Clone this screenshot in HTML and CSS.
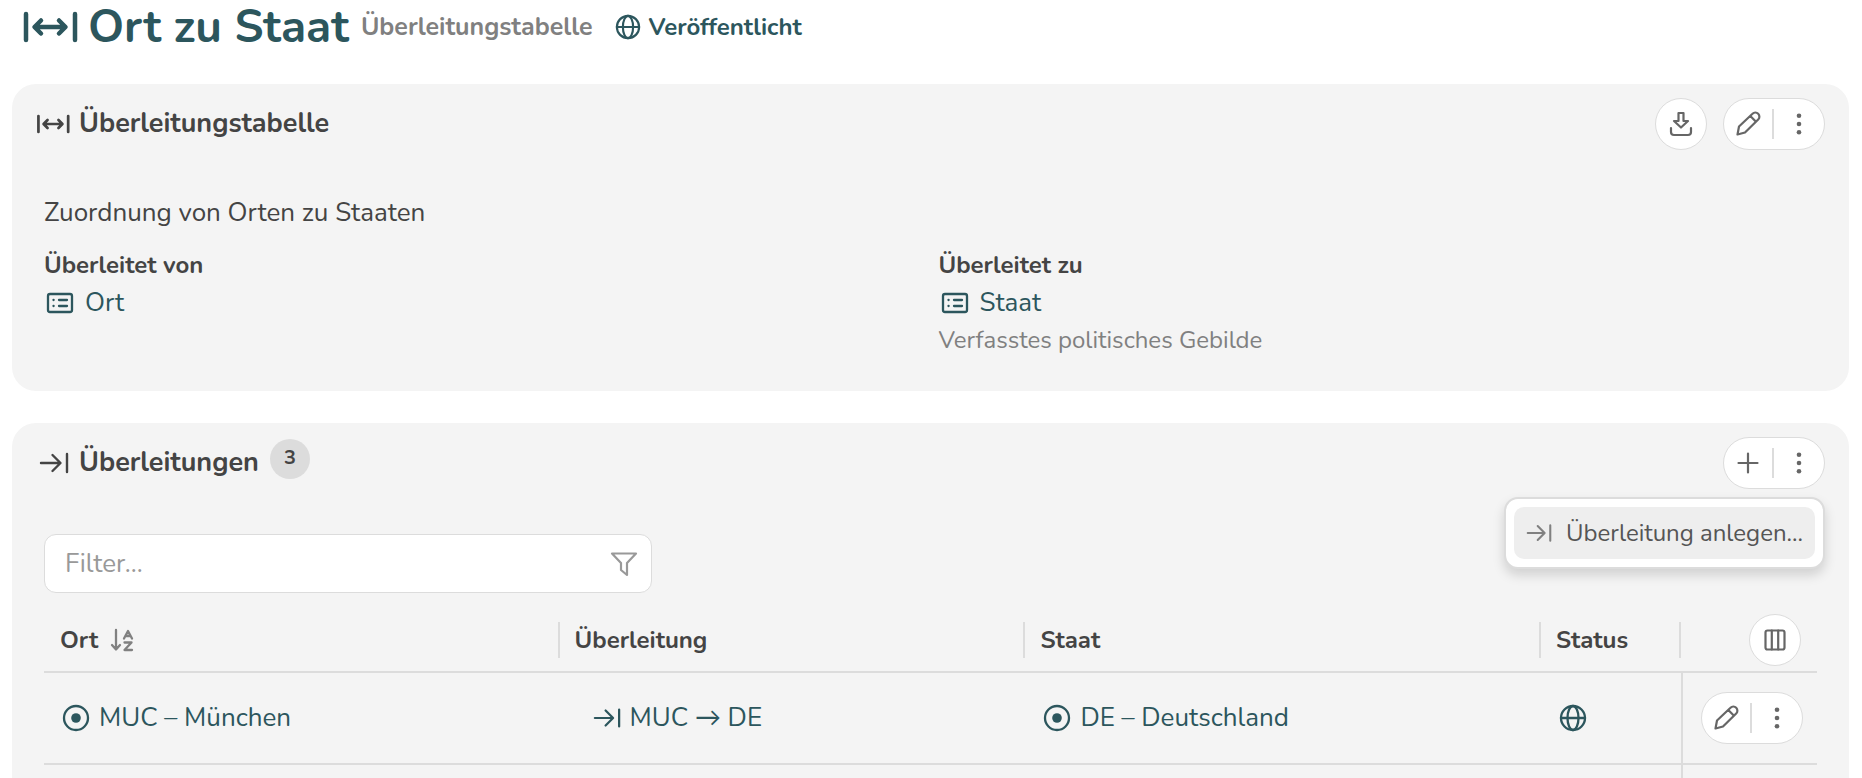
FILE: index.html
```html
<!DOCTYPE html>
<html lang="de">
<head>
    <meta charset="UTF-8">
    <meta name="viewport" content="width=device-width, initial-scale=1.0">
    <title>Ort zu Staat</title>
    <link rel="stylesheet" href="styles.css">
</head>
<body>
    <svg class="symbols" aria-hidden="true">
        <symbol id="i-mapping" viewBox="0 0 56 32" stroke-width="4.500">
            <path d="M4 3v26M53 3v26M13 16h30M19 9.500L12.500 16l6.500 6.500M37 9.500l6.500 6.500-6.500 6.500"/>
        </symbol>
        <symbol id="i-arrow" viewBox="0 0 30 24" stroke-width="2.400">
            <path d="M2 12h19M13.500 4l8 8-8 8M28 3v18"/>
        </symbol>
        <symbol id="i-globe" viewBox="0 0 28 28" stroke-width="2.300">
            <circle cx="14" cy="14" r="12"/>
            <ellipse cx="14" cy="14" rx="5.500" ry="12"/>
            <path d="M2 14h24"/>
        </symbol>
        <symbol id="i-list" viewBox="0 0 28 22" stroke-width="2.300">
            <rect x="2" y="2" width="24" height="18" rx="2"/>
            <path d="M7.500 8h.1M7.500 14h.1M13 8h8M13 14h8"/>
        </symbol>
        <symbol id="i-target" viewBox="0 0 28 28" stroke-width="2.300">
            <circle cx="14" cy="14" r="12"/>
            <circle class="dot" cx="14" cy="14" r="4.800"/>
        </symbol>
        <symbol id="i-pencil" viewBox="0 0 26 26" stroke-width="2.200">
            <path d="M2.500 23.500l1.500-8L17.500 2.800a3.900 3.900 0 0 1 5.700 5.700L10 21.500zM15.300 5l5.700 5.700"/>
        </symbol>
        <symbol id="i-dots" viewBox="0 0 26 26">
            <circle class="dot" cx="13" cy="4.800" r="2.300"/>
            <circle class="dot" cx="13" cy="13" r="2.300"/>
            <circle class="dot" cx="13" cy="21.200" r="2.300"/>
        </symbol>
        <symbol id="i-download" viewBox="0 0 26 26" stroke-width="2.200">
            <path d="M10.500 2h5v8h4.500l-7 6.500-7-6.500h4.500zM3 17v4a3 3 0 0 0 3 3h14a3 3 0 0 0 3-3v-4"/>
        </symbol>
        <symbol id="i-plus" viewBox="0 0 26 26" stroke-width="2.200">
            <path d="M13 3.500v19M3.500 13h19"/>
        </symbol>
        <symbol id="i-columns" viewBox="0 0 26 26" stroke-width="2.200">
            <rect x="3.500" y="3.500" width="19" height="19" rx="2"/>
            <path d="M9.800 3.500v19M16.200 3.500v19"/>
        </symbol>
        <symbol id="i-filter" viewBox="0 0 28 26" stroke-width="2.200">
            <path d="M2 2.500h24l-9 9.500v12l-6-5v-7z"/>
        </symbol>
        <symbol id="i-sort" viewBox="0 0 24 24" stroke-width="2.300">
            <path d="M6 2v19M2 17l4 4.500L10 17M14 10.500L18 3l4 7.500M15.500 8h5M14.500 14.500h7l-7 7.500h7.500"/>
        </symbol>
    </svg>

    <header class="page-header">
        <svg class="icon icon-title"><use href="#i-mapping"/></svg>
        <h1>Ort zu Staat</h1>
        <span class="type">Überleitungstabelle</span>
        <span class="state">
            <svg class="icon"><use href="#i-globe"/></svg>
            Veröffentlicht
        </span>
    </header>

    <section class="card">
        <div class="card-header">
            <svg class="icon icon-mapping"><use href="#i-mapping"/></svg>
            <h2>Überleitungstabelle</h2>
            <div class="actions">
                <button class="round" aria-label="Herunterladen"><svg class="icon"><use href="#i-download"/></svg></button>
                <div class="pill">
                    <button aria-label="Bearbeiten"><svg class="icon"><use href="#i-pencil"/></svg></button>
                    <button aria-label="Mehr"><svg class="icon"><use href="#i-dots"/></svg></button>
                </div>
            </div>
        </div>
        <div class="card-body">
            <p>Zuordnung von Orten zu Staaten</p>
            <div class="fields">
                <div>
                    <h3>Überleitet von</h3>
                    <a class="link" href="#"><svg class="icon icon-list"><use href="#i-list"/></svg>Ort</a>
                </div>
                <div>
                    <h3>Überleitet zu</h3>
                    <a class="link" href="#"><svg class="icon icon-list"><use href="#i-list"/></svg>Staat</a>
                    <div class="hint">Verfasstes politisches Gebilde</div>
                </div>
            </div>
        </div>
    </section>

    <section class="card">
        <div class="card-header">
            <svg class="icon icon-arrow"><use href="#i-arrow"/></svg>
            <h2>Überleitungen</h2>
            <span class="badge">3</span>
            <div class="actions">
                <div class="pill">
                    <button aria-label="Hinzufügen"><svg class="icon"><use href="#i-plus"/></svg></button>
                    <button aria-label="Mehr"><svg class="icon"><use href="#i-dots"/></svg></button>
                </div>
                <div class="menu">
                    <button><svg class="icon"><use href="#i-arrow"/></svg>Überleitung anlegen...</button>
                </div>
            </div>
        </div>
        <div class="card-body">
            <label class="filter">
                <input type="text" placeholder="Filter..." aria-label="Filter">
                <svg class="icon"><use href="#i-filter"/></svg>
            </label>
            <table>
                <colgroup>
                    <col class="col-ort">
                    <col class="col-map">
                    <col class="col-staat">
                    <col class="col-status">
                    <col class="col-actions">
                </colgroup>
                <thead>
                    <tr>
                        <th><div class="th">Ort <svg class="icon icon-sort"><use href="#i-sort"/></svg></div></th>
                        <th><div class="th">Überleitung</div></th>
                        <th><div class="th">Staat</div></th>
                        <th><div class="th">Status</div></th>
                        <th><button class="round" aria-label="Spalten"><svg class="icon"><use href="#i-columns"/></svg></button></th>
                    </tr>
                </thead>
                <tbody>
                    <tr>
                        <td><a class="link" href="#"><svg class="icon"><use href="#i-target"/></svg>MUC – München</a></td>
                        <td class="mapping"><a class="link" href="#"><svg class="icon"><use href="#i-arrow"/></svg>MUC → DE</a></td>
                        <td><a class="link" href="#"><svg class="icon"><use href="#i-target"/></svg>DE – Deutschland</a></td>
                        <td><span class="link"><svg class="icon"><use href="#i-globe"/></svg></span></td>
                        <td>
                            <div class="pill">
                                <button aria-label="Bearbeiten"><svg class="icon"><use href="#i-pencil"/></svg></button>
                                <button aria-label="Mehr"><svg class="icon"><use href="#i-dots"/></svg></button>
                            </div>
                        </td>
                    </tr>
                    <tr><td></td><td></td><td></td><td></td><td></td></tr>
                </tbody>
            </table>
        </div>
    </section>
</body>
</html>
```
FILE: styles.css
```css
* {
    box-sizing: border-box;
}
body {
    font-family: Nunito, Lato, 'Noto Sans', sans-serif;
    font-size: 26px;
    line-height: 36px;
    margin: 0;
    padding: 0 13px 0 12px;
    height: 100vh;
    overflow: hidden;
    background-color: #fff;
    color: #444;
}
h1, h2, h3, p {
    margin: 0;
}
button, input {
    font: inherit;
    color: inherit;
}
.symbols {
    display: none;
}
.icon {
    width: 28px;
    height: 28px;
    flex: none;
    fill: none;
    stroke: currentColor;
    stroke-linecap: round;
    stroke-linejoin: round;
}
.dot {
    fill: currentColor;
    stroke: none;
}

/* Seitenkopf */
.page-header {
    display: flex;
    align-items: center;
    height: 54px;
    margin-bottom: 30px;
    padding-left: 10px;
    color: #2c565d;
}
.icon-title {
    width: 56px;
    height: 32px;
    margin-right: 10px;
}
h1 {
    font-size: 46px;
    line-height: 54px;
}
.type, .state {
    font-weight: bold;
}
.type {
    font-size: 25px;
    color: #808080;
    margin: 0 22px 0 12px;
}
.state {
    display: flex;
    align-items: center;
    gap: 8px;
    font-size: 24px;
}
.state .icon {
    width: 26px;
    height: 26px;
}

/* Karten */
.card {
    background-color: #f4f4f4;
    border-radius: 24px;
    margin-bottom: 32px;
    padding: 14px 24px 32px;
}
.card-header {
    display: flex;
    align-items: center;
    height: 52px;
    margin-bottom: 45px;
}
.icon-mapping {
    width: 34px;
    margin-right: 9px;
}
.icon-arrow {
    width: 30px;
    margin: 0 10px 0 3px;
}
h2 {
    font-size: 27px;
    line-height: 36px;
}
.badge {
    width: 40px;
    height: 40px;
    margin: 0 0 8px 11px;
    border-radius: 50%;
    background-color: #dcdcdc;
    font-size: 20px;
    font-weight: bold;
    line-height: 38px;
    text-align: center;
}
.card-body {
    padding: 0 8px;
}
.actions {
    position: relative;
    display: flex;
    gap: 16px;
    margin-left: auto;
}
.round, .pill {
    height: 52px;
    border: 1px solid #dcdcdc;
    border-radius: 26px;
    background-color: #fff;
    color: #666;
}
.round {
    display: flex;
    align-items: center;
    justify-content: center;
    width: 52px;
    padding: 0;
}
.round .icon, .pill .icon {
    width: 26px;
    height: 26px;
}
.pill {
    display: flex;
    align-items: center;
    width: 102px;
}
.pill button {
    display: flex;
    align-items: center;
    justify-content: center;
    width: 50px;
    height: 30px;
    padding: 0;
    border: none;
    border-right: 2px solid #dcdcdc;
    background: none;
}
.pill button + button {
    border-right: none;
}
.menu {
    position: absolute;
    top: 60px;
    right: 0;
    padding: 8px;
    border: 2px solid #dcdcdc;
    border-radius: 14px;
    background-color: #fff;
    box-shadow: 0 6px 12px rgba(0, 0, 0, 0.15);
}
.menu button {
    display: flex;
    align-items: center;
    gap: 14px;
    height: 52px;
    padding: 0 12px;
    border: none;
    border-radius: 10px;
    background-color: #eee;
    color: #555;
    font-size: 24px;
    white-space: nowrap;
}
.menu .icon {
    width: 26px;
    color: #808080;
}

/* Felder */
.fields {
    display: grid;
    grid-template-columns: 1fr 1fr;
    gap: 16px;
    margin-top: 16px;
}
h3 {
    font-size: 24px;
    line-height: 36px;
}
.link {
    display: flex;
    align-items: center;
    gap: 9px;
    height: 40px;
    color: #2c565d;
    text-decoration: none;
}
.icon-list {
    width: 32px;
    height: 22px;
}
.hint {
    font-size: 24px;
    line-height: 34px;
    padding-bottom: 2px;
    color: #808080;
}

/* Filter und Tabelle */
.filter {
    display: flex;
    align-items: center;
    width: 34%;
    min-width: 608px;
    height: 59px;
    margin-bottom: 20px;
    padding: 0 13px 0 20px;
    border: 1px solid #dcdcdc;
    border-radius: 12px;
    background-color: #fff;
}
.filter input {
    flex: 1;
    padding: 0;
    border: none;
    outline: none;
    background: none;
}
.filter input::placeholder {
    color: #999;
}
.filter .icon {
    color: #999;
}
table {
    width: 100%;
    border-collapse: separate;
    border-spacing: 0;
    table-layout: fixed;
}
.col-ort, .col-staat {
    width: 29.1%;
}
.col-map {
    width: 26.3%;
}
.col-status {
    width: 140px;
}
.col-actions {
    width: 136px;
}
th, td {
    padding: 0;
    border-bottom: 2px solid #dcdcdc;
    text-align: left;
}
th {
    height: 60px;
    padding-bottom: 5px;
    font-size: 24px;
}
.th {
    display: flex;
    align-items: center;
    gap: 12px;
    height: 36px;
    padding-left: 16px;
    border-right: 2px solid #dcdcdc;
}
th + th .th {
    padding-left: 15px;
}
.icon-sort {
    width: 24px;
    height: 24px;
    color: #808080;
}
th .round {
    margin-left: auto;
    margin-right: 16px;
}
td {
    height: 92px;
    padding-left: 18px;
}
td.mapping {
    padding-left: 33px;
}
td:last-child {
    border-left: 2px solid #dcdcdc;
}
```
